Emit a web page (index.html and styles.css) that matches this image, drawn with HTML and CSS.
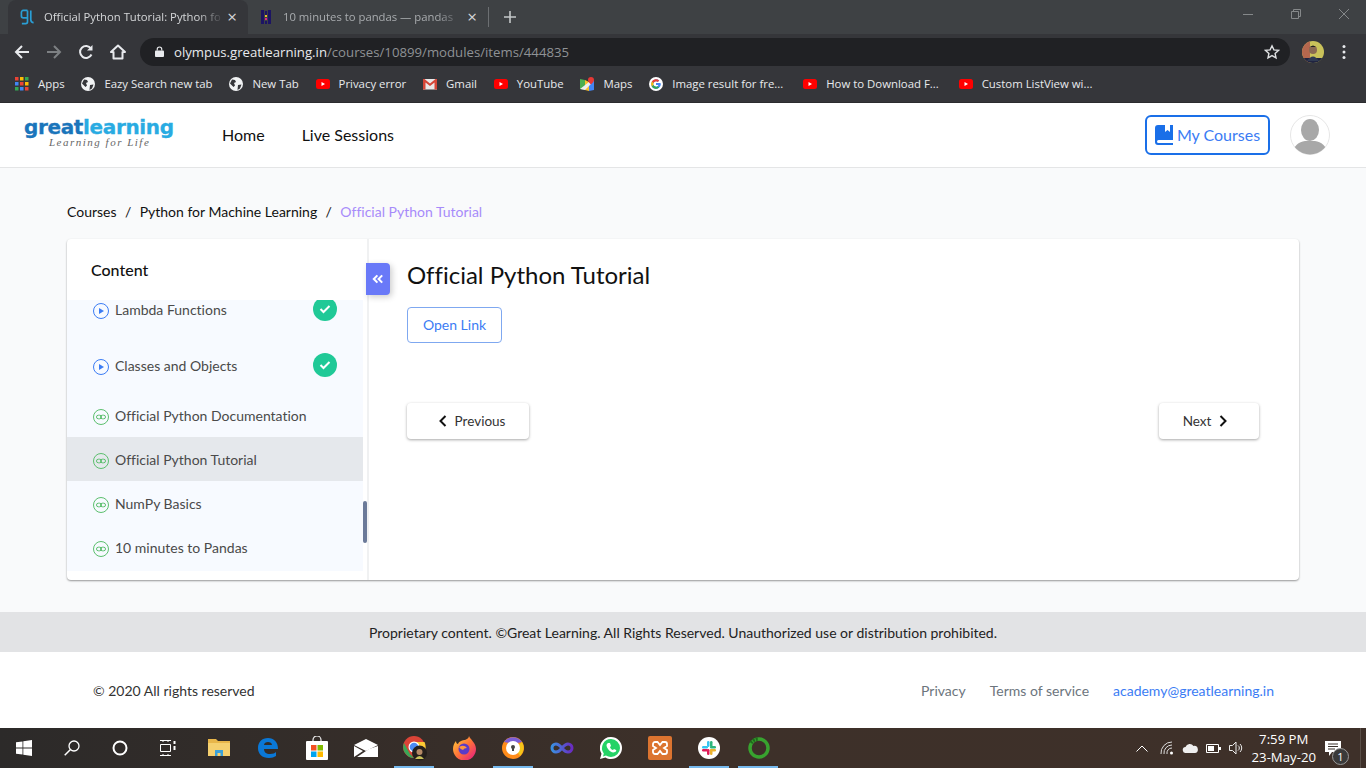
FILE: index.html
```html
<!DOCTYPE html>
<html lang="en">
<head>
  <meta charset="UTF-8">
  <title>Official Python Tutorial</title>
  <link rel="stylesheet" href="styles.css">
</head>
<body>

<!-- Browser chrome -->
<div class="tabstrip">
  <div class="tab active">
    <svg class="favicon" viewBox="0 0 16 16"><path d="M8 1H3.500a2 2 0 0 0-2 2v4a2 2 0 0 0 2 2H8V1v12a2 2 0 0 1-2 2H2M11.500 1v10a3 3 0 0 0 3 3" fill="none" stroke="#2a9fd6" stroke-width="1.800"/></svg>
    <span class="tab-title">Official Python Tutorial: Python fo</span>
    <span class="tab-close">&times;</span>
  </div>
  <div class="tab">
    <svg class="favicon small" viewBox="0 0 12 16"><rect x="1" y="1" width="3" height="14" fill="#1c1463"/><rect x="8" y="1" width="3" height="14" fill="#1c1463"/><rect x="5" y="2" width="2" height="4" fill="#1c1463"/><rect x="5" y="6" width="2" height="2" fill="#e8b92d"/><rect x="5" y="9" width="2" height="2" fill="#e0218a"/><rect x="5" y="12" width="2" height="3" fill="#1c1463"/></svg>
    <span class="tab-title">10 minutes to pandas — pandas</span>
    <span class="tab-close">&times;</span>
  </div>
  <span class="tab-sep"></span>
  <svg class="new-tab" viewBox="0 0 12 12"><path d="M6 0v12M0 6h12" stroke="#c4c7c9" stroke-width="1.600"/></svg>
  <div class="win-controls">
    <svg viewBox="0 0 10 10"><path d="M0 5.500h10" stroke="#85888a"/></svg>
    <svg viewBox="0 0 10 10"><path d="M.5 2.500h7v7h-7zM2.500 2.500v-2h7v7h-2" fill="none" stroke="#85888a"/></svg>
    <svg viewBox="0 0 10 10"><path d="M0 0l10 10M10 0L0 10" stroke="#85888a"/></svg>
  </div>
</div>

<div class="toolbar">
  <svg class="nav-icon" viewBox="0 0 16 16"><path d="M15 8H2M8 2L2 8l6 6" fill="none" stroke="#e8eaed" stroke-width="2"/></svg>
  <svg class="nav-icon" viewBox="0 0 16 16"><path d="M1 8h13M8 2l6 6-6 6" fill="none" stroke="#7d8083" stroke-width="2"/></svg>
  <svg class="nav-icon" viewBox="0 0 16 16"><path d="M13.500 10.500A6 6 0 1 1 13 4.500" fill="none" stroke="#e8eaed" stroke-width="2"/><path d="M14.500 1v5.500H9z" fill="#e8eaed"/></svg>
  <svg class="nav-icon" viewBox="0 0 16 16"><path d="M8 1.500L1 8h2.500v6.500h9V8H15z" fill="none" stroke="#e8eaed" stroke-width="2" stroke-linejoin="round"/></svg>
  <div class="omnibox">
    <svg class="lock" viewBox="0 0 10 12"><path d="M2.500 5V3.500a2.500 2.500 0 0 1 5 0V5" fill="none" stroke="#e8eaed" stroke-width="1.300"/><rect y="5" width="10" height="7" rx="1" fill="#e8eaed"/></svg>
    <span class="url"><b>olympus.greatlearning.in</b>/courses/10899/modules/items/444835</span>
    <svg class="star" viewBox="0 0 16 16"><path d="M8 1.800l1.900 4.100 4.500.5-3.300 3 .9 4.500L8 11.600l-4 2.300.9-4.500-3.300-3 4.500-.5z" fill="none" stroke="#dfe1e3" stroke-width="1.400"/></svg>
  </div>
  <svg class="profile" viewBox="0 0 22 22"><defs><clipPath id="pc"><circle cx="11" cy="11" r="11"/></clipPath></defs><g clip-path="url(#pc)"><rect width="22" height="22" fill="#c9c25a"/><rect width="8" height="22" fill="#b5674e"/><rect y="17" width="22" height="5" fill="#1f2340"/><circle cx="11" cy="9" r="4" fill="#8a6a52"/><path d="M7 7q4-5 8 0l-1-1H8z" fill="#222"/><path d="M5 20q6-9 12 0z" fill="#2f3a52"/></g></svg>
  <svg class="kebab" viewBox="0 0 4 16"><circle cx="2" cy="2.500" r="1.500" fill="#e8eaed"/><circle cx="2" cy="8" r="1.500" fill="#e8eaed"/><circle cx="2" cy="13.500" r="1.500" fill="#e8eaed"/></svg>
</div>

<div class="bookmarks">
  <a class="bm">
    <svg viewBox="0 0 14 14"><rect width="3.500" height="3.500" fill="#ea4335"/><rect x="5" width="3.500" height="3.500" fill="#fbbc05"/><rect x="10" width="3.500" height="3.500" fill="#34a853"/><rect y="5" width="3.500" height="3.500" fill="#4285f4"/><rect x="5" y="5" width="3.500" height="3.500" fill="#ea4335"/><rect x="10" y="5" width="3.500" height="3.500" fill="#fbbc05"/><rect y="10" width="3.500" height="3.500" fill="#34a853"/><rect x="5" y="10" width="3.500" height="3.500" fill="#4285f4"/><rect x="10" y="10" width="3.500" height="3.500" fill="#ea4335"/></svg>
    Apps
  </a>
  <a class="bm">
    <svg viewBox="0 0 14 14"><circle cx="7" cy="7" r="7" fill="#f1f3f4"/><path d="M3 2.500l3 .5 1 2-2 1 1 2.500-1.500 1.500L1 6.500zM9 8l3.500-.5L11 11.500 8.500 13z" fill="#35363a"/></svg>
    Eazy Search new tab
  </a>
  <a class="bm">
    <svg viewBox="0 0 14 14"><circle cx="7" cy="7" r="7" fill="#f1f3f4"/><path d="M3 2.500l3 .5 1 2-2 1 1 2.500-1.500 1.500L1 6.500zM9 8l3.500-.5L11 11.500 8.500 13z" fill="#35363a"/></svg>
    New Tab
  </a>
  <a class="bm">
    <svg viewBox="0 0 14 14"><rect y="2" width="14" height="10" rx="2.500" fill="#f00"/><path d="M5.500 5v4l3.500-2z" fill="#fff"/></svg>
    Privacy error
  </a>
  <a class="bm">
    <svg viewBox="0 0 14 14"><rect y="2" width="14" height="10.500" fill="#e8e8e8"/><path d="M0 2v10.500h2.500V5.500L7 9l4.500-3.500v7H14V2h-1.500L7 6.500 1.500 2z" fill="#d44638"/></svg>
    Gmail
  </a>
  <a class="bm">
    <svg viewBox="0 0 14 14"><rect y="2" width="14" height="10" rx="2.500" fill="#f00"/><path d="M5.500 5v4l3.500-2z" fill="#fff"/></svg>
    YouTube
  </a>
  <a class="bm">
    <svg viewBox="0 0 14 14"><path d="M0 2l5 1v10l-5-1z" fill="#4caf50"/><path d="M5 3l4 2v9l-4-1z" fill="#fbc02d"/><path d="M9 5l5-2v10l-5 1z" fill="#4285f4"/><path d="M0 12L9 5l2 2-6 6z" fill="#eee"/><path d="M11 0a3 3 0 0 1 3 3c0 2-3 4.500-3 4.500S8 5 8 3a3 3 0 0 1 3-3z" fill="#e53935"/></svg>
    Maps
  </a>
  <a class="bm long">
    <svg viewBox="0 0 16 16"><circle cx="8" cy="8" r="8" fill="#fff"/><path d="M13 6.800H8v2.400h2.800A3 3 0 1 1 10 5.800l1.700-1.700A5.500 5.500 0 1 0 13.500 8z" fill="#4285f4"/><path d="M3.200 5.200A5.500 5.500 0 0 1 11.700 4.100L10 5.800a3 3 0 0 0-4.800 1z" fill="#ea4335"/><path d="M3.200 5.200l2 1.600a3 3 0 0 0 0 2.400l-2 1.600a5.500 5.500 0 0 1 0-5.600z" fill="#fbbc05"/><path d="M3.200 10.800l2-1.600a3 3 0 0 0 4.600 1.300l1.900 1.500a5.500 5.500 0 0 1-8.500-1.200z" fill="#34a853"/></svg>
    Image result for fre...
  </a>
  <a class="bm long">
    <svg viewBox="0 0 14 14"><rect y="2" width="14" height="10" rx="2.500" fill="#f00"/><path d="M5.500 5v4l3.500-2z" fill="#fff"/></svg>
    How to Download F...
  </a>
  <a class="bm">
    <svg viewBox="0 0 14 14"><rect y="2" width="14" height="10" rx="2.500" fill="#f00"/><path d="M5.500 5v4l3.500-2z" fill="#fff"/></svg>
    Custom ListView wi...
  </a>
</div>

<!-- Site header -->
<header class="site-header">
  <div class="logo">
    <div class="logo-name"><span class="great">great</span><span class="learning">learning</span></div>
    <div class="logo-tag">Learning for Life</div>
  </div>
  <nav class="main-nav">
    <a>Home</a>
    <a>Live Sessions</a>
  </nav>
  <button class="my-courses">
    <svg viewBox="0 0 18 20"><path d="M3 0h15v15H3.500a1 1 0 0 0 0 3H18v2H3a3 3 0 0 1-3-3V3a3 3 0 0 1 3-3z" fill="#1a6fe8"/><path d="M10 0h5v7l-2.500-2L10 7z" fill="#fff"/></svg>
    My Courses
  </button>
  <svg class="avatar" viewBox="0 0 40 40"><defs><clipPath id="ac"><circle cx="20" cy="20" r="19.500"/></clipPath></defs><circle cx="20" cy="20" r="19.500" fill="#fff" stroke="#e6e6e6"/><g clip-path="url(#ac)"><ellipse cx="20" cy="15" rx="9" ry="11" fill="#a8a8a8"/><path d="M3 40c0-10 6-13 12-14h10c6 1 12 4 12 14z" fill="#a8a8a8"/></g></svg>
</header>

<main class="page">
  <div class="breadcrumb">
    <a>Courses</a><span>/</span><a>Python for Machine Learning</a><span>/</span><a class="current">Official Python Tutorial</a>
  </div>

  <section class="card">
    <aside class="sidebar">
      <h3>Content</h3>
      <div class="list-wrap">
        <ul class="item-list">
          <li class="tall">
            <svg class="ico" viewBox="0 0 16 16"><circle cx="8" cy="8" r="7.500" fill="none" stroke="#3b7cf4"/><path d="M6 5v6l5-3z" fill="#3b7cf4"/></svg>
            <span>Lambda Functions</span>
            <span class="done"><svg viewBox="0 0 12 10"><path d="M1.500 5l3 3 6-6" fill="none" stroke="#fff" stroke-width="2"/></svg></span>
          </li>
          <li class="tall">
            <svg class="ico" viewBox="0 0 16 16"><circle cx="8" cy="8" r="7.500" fill="none" stroke="#3b7cf4"/><path d="M6 5v6l5-3z" fill="#3b7cf4"/></svg>
            <span>Classes and Objects</span>
            <span class="done"><svg viewBox="0 0 12 10"><path d="M1.500 5l3 3 6-6" fill="none" stroke="#fff" stroke-width="2"/></svg></span>
          </li>
          <li>
            <svg class="ico" viewBox="0 0 16 16"><circle cx="8" cy="8" r="7.500" fill="none" stroke="#5cbf6e"/><rect x="3.500" y="6.200" width="5" height="3.600" rx="1.800" fill="none" stroke="#5cbf6e"/><rect x="7.500" y="6.200" width="5" height="3.600" rx="1.800" fill="none" stroke="#5cbf6e"/></svg>
            <span>Official Python Documentation</span>
          </li>
          <li class="active">
            <svg class="ico" viewBox="0 0 16 16"><circle cx="8" cy="8" r="7.500" fill="none" stroke="#5cbf6e"/><rect x="3.500" y="6.200" width="5" height="3.600" rx="1.800" fill="none" stroke="#5cbf6e"/><rect x="7.500" y="6.200" width="5" height="3.600" rx="1.800" fill="none" stroke="#5cbf6e"/></svg>
            <span>Official Python Tutorial</span>
          </li>
          <li>
            <svg class="ico" viewBox="0 0 16 16"><circle cx="8" cy="8" r="7.500" fill="none" stroke="#5cbf6e"/><rect x="3.500" y="6.200" width="5" height="3.600" rx="1.800" fill="none" stroke="#5cbf6e"/><rect x="7.500" y="6.200" width="5" height="3.600" rx="1.800" fill="none" stroke="#5cbf6e"/></svg>
            <span>NumPy Basics</span>
          </li>
          <li>
            <svg class="ico" viewBox="0 0 16 16"><circle cx="8" cy="8" r="7.500" fill="none" stroke="#5cbf6e"/><rect x="3.500" y="6.200" width="5" height="3.600" rx="1.800" fill="none" stroke="#5cbf6e"/><rect x="7.500" y="6.200" width="5" height="3.600" rx="1.800" fill="none" stroke="#5cbf6e"/></svg>
            <span>10 minutes to Pandas</span>
          </li>
        </ul>
        <div class="scroll-track"><div class="scroll-thumb"></div></div>
      </div>
    </aside>

    <button class="collapse">
      <svg viewBox="0 0 10 8"><path d="M4.500 1L1.500 4l3 3M8.500 1l-3 3 3 3" fill="none" stroke="#fff" stroke-width="1.700"/></svg>
    </button>

    <div class="content">
      <h2>Official Python Tutorial</h2>
      <a class="open-link">Open Link</a>
      <div class="pager">
        <button class="prev">
          <svg viewBox="0 0 8 12"><path d="M6.500 1L1.500 6l5 5" fill="none" stroke="#111" stroke-width="2"/></svg>
          Previous
        </button>
        <button class="next">
          Next
          <svg viewBox="0 0 8 12"><path d="M1.500 1l5 5-5 5" fill="none" stroke="#111" stroke-width="2"/></svg>
        </button>
      </div>
    </div>
  </section>
</main>

<div class="notice">Proprietary content. ©Great Learning. All Rights Reserved. Unauthorized use or distribution prohibited.</div>

<footer class="site-footer">
  <span class="copy">© 2020 All rights reserved</span>
  <a>Privacy</a>
  <a>Terms of service</a>
  <a class="mail">academy@greatlearning.in</a>
</footer>

<!-- Windows taskbar -->
<div class="taskbar">
  <div class="task-icons">
    <span class="task sys"><svg width="16" height="16" viewBox="0 0 16 16"><path d="M0 2.300l6.500-.9v6.200H0zM7.300 1.300L16 0v7.600H7.300zM0 8.400h6.500v6.200L0 13.700zM7.300 8.400H16V16l-8.700-1.200z" fill="#fff"/></svg></span>
    <span class="task sys"><svg width="16" height="16" viewBox="0 0 16 16"><circle cx="10" cy="6" r="5" fill="none" stroke="#fff" stroke-width="1.300"/><path d="M6.500 9.500L.7 15.300" stroke="#fff" stroke-width="1.500"/></svg></span>
    <span class="task sys"><svg width="16" height="16" viewBox="0 0 16 16"><circle cx="8" cy="8" r="6.500" fill="none" stroke="#fff" stroke-width="2"/></svg></span>
    <span class="task sys"><svg width="16" height="16" viewBox="0 0 16 16"><path d="M0 .5h11M0 15.500h11M.5 4.500h10v7H.5z" fill="none" stroke="#fff"/><path d="M3 0v2M8 0v2M3 14v2M8 14v2" stroke="#fff"/><rect x="13.500" y="1" width="2" height="3" fill="#fff"/><rect x="13.500" y="6" width="2" height="4" fill="#fff"/></svg></span>
    <span class="task first-app"><svg width="22" height="18" viewBox="0 0 22 18"><path d="M0 0h8l2 2h12v15H0z" fill="#e8b64a"/><path d="M0 4h22v13H0z" fill="#f5d06f"/><path d="M7 17v-6h8v6h-2.500v-3h-3v3z" fill="#3aa0d8"/></svg></span>
    <span class="task"><svg width="20" height="20" viewBox="0 0 20 20"><path d="M10 0C16 0 20 4 20 11H6c0 3 2 5 6 5 3 0 5-1 6-2v4c-2 1-4 2-7 2C4 20 0 16 0 10 0 4 4 0 10 0zm4 7c0-2-2-3-4-3S6 5 6 7z" fill="#0a78d7"/></svg></span>
    <span class="task"><svg width="24" height="24" viewBox="0 0 24 24"><path d="M8 6V4a4 4 0 0 1 8 0v2" fill="none" stroke="#eee" stroke-width="1.200"/><rect x="1" y="5" width="22" height="19" rx="1" fill="#fff"/><rect x="6" y="9" width="5.500" height="5.500" fill="#f25022"/><rect x="12.500" y="9" width="5.500" height="5.500" fill="#7fba00"/><rect x="6" y="15.500" width="5.500" height="5.500" fill="#00a4ef"/><rect x="12.500" y="15.500" width="5.500" height="5.500" fill="#ffb900"/></svg></span>
    <span class="task"><svg width="24" height="18" viewBox="0 0 24 18"><path d="M0 6l12-6 12 6-12 6z" fill="#fff"/><path d="M0 7l9 5-9 6zM24 7v11H3l9-6 3-2z" fill="#fff"/></svg></span>
    <span class="task on"><svg width="26" height="26" viewBox="0 0 26 26"><circle cx="12" cy="12" r="11" fill="#db4437"/><path d="M2 8l6 11 4 4a11 11 0 0 1-10-15z" fill="#3aa757"/><path d="M12 7h10.500a11 11 0 0 1-10 16l5-10z" fill="#fcc934"/><circle cx="12" cy="12" r="5.500" fill="#fff"/><circle cx="12" cy="12" r="4.300" fill="#4b8bf5"/><circle cx="17.500" cy="18" r="7.500" fill="#241f1c"/><circle cx="17.500" cy="17" r="3" fill="#b58a66"/><path d="M13 24q4.500-6 9 0z" fill="#c9c25a"/></svg></span>
    <span class="task"><svg width="24" height="24" viewBox="0 0 24 24"><defs><linearGradient id="ff" x1="0" y1="0" x2="1" y2="1"><stop offset="0" stop-color="#ffd43b"/><stop offset=".5" stop-color="#ff7139"/><stop offset="1" stop-color="#e31587"/></linearGradient></defs><path d="M17 0c1 3 7 7 7 13a11.500 11.500 0 0 1-23 0c0-3 1-6 3-8 0 2 1 3 2 3 1-3 5-4 7-4 2-1 4-2 4-4z" fill="url(#ff)"/><circle cx="12" cy="13" r="5.500" fill="#5b3bc8"/><path d="M7 11q5-3 8 1-3 0-4 2-2 0-4-3z" fill="#ff9640"/></svg></span>
    <span class="task on"><svg width="24" height="24" viewBox="0 0 24 24"><circle cx="12" cy="12" r="11" fill="#ff8c1a"/><path d="M3 6a11 11 0 0 1 18 0l-9 2z" fill="#7b5fd6"/><path d="M21 6a11 11 0 0 1-2 14l-5-8z" fill="#f5c61a"/><circle cx="12" cy="12" r="7" fill="#fff"/><circle cx="12" cy="11" r="2" fill="#444"/><rect x="11" y="11" width="2" height="4" fill="#444"/></svg></span>
    <span class="task"><svg width="24" height="14" viewBox="0 0 24 14"><defs><linearGradient id="inf"><stop offset="0" stop-color="#3a8fe0"/><stop offset="1" stop-color="#6a2bc2"/></linearGradient></defs><path d="M6 3c3 0 5 3 6 4s3 4 6 4a4 4 0 0 0 0-8c-3 0-5 3-6 4s-3 4-6 4a4 4 0 0 1 0-8z" fill="none" stroke="url(#inf)" stroke-width="3"/></svg></span>
    <span class="task"><svg width="22" height="22" viewBox="0 0 22 22"><path d="M11 0a11 11 0 0 1 0 22c-2 0-4-.5-5.500-1.500L0 22l1.500-5.300A11 11 0 0 1 11 0z" fill="#fff"/><path d="M11 2a9 9 0 0 1 0 18c-2 0-3.500-.5-5-1.400l-3 .8.800-3A9 9 0 0 1 11 2z" fill="#25d366"/><path d="M8 6c-2 1-2 3 0 6s5 4 7 3 1-2 1-2l-2-1-1 1c-1 0-3-2-3-3l1-1-1-3z" fill="#fff"/></svg></span>
    <span class="task"><svg width="24" height="24" viewBox="0 0 24 24"><rect width="24" height="24" rx="2" fill="#dc7430"/><path d="M7 6h2.500l2.500 3 2.500-3H17a2 2 0 0 1 2 2v2l-3 2 3 2v2a2 2 0 0 1-2 2h-2.500L12 15l-2.500 3H7a2 2 0 0 1-2-2v-2l3-2-3-2V8a2 2 0 0 1 2-2z" fill="none" stroke="#fff" stroke-width="1.800"/></svg></span>
    <span class="task on"><svg width="22" height="22" viewBox="0 0 22 22"><circle cx="11" cy="11" r="11" fill="#fff"/><rect x="9" y="4" width="2.500" height="6" rx="1.200" fill="#36c5f0"/><rect x="4" y="9" width="6" height="2.500" rx="1.200" fill="#36c5f0"/><rect x="12" y="4" width="2.500" height="6" rx="1.200" fill="#2eb67d"/><rect x="12" y="9" width="6" height="2.500" rx="1.200" fill="#2eb67d"/><rect x="12" y="12" width="2.500" height="6" rx="1.200" fill="#ecb22e"/><rect x="12" y="12" width="6" height="2.500" rx="1.200" fill="#ecb22e"/><rect x="9" y="12" width="2.500" height="6" rx="1.200" fill="#e01e5a"/><rect x="4" y="12" width="6" height="2.500" rx="1.200" fill="#e01e5a"/></svg></span>
    <span class="task on"><svg width="22" height="22" viewBox="0 0 22 22"><circle cx="11" cy="11" r="9" fill="none" stroke="#38a32f" stroke-width="3.500"/><path d="M3 6a9 9 0 0 1 7-4" fill="none" stroke="#1f6b1c" stroke-width="3.500" stroke-dasharray="2 1"/></svg></span>
  </div>

  <div class="tray">
    <svg class="chevron" width="12" height="7" viewBox="0 0 12 7"><path d="M.5 6.500L6 1l5.500 5.500" fill="none" stroke="#fff"/></svg>
    <svg width="14" height="14" viewBox="0 0 14 14"><path d="M1 13A11 11 0 0 1 12 1M4 13a8 8 0 0 1 8-9M7 13a5 5 0 0 1 5-6" fill="none" stroke="#ddd"/><circle cx="11.500" cy="12" r="1.500" fill="#fff"/></svg>
    <svg width="16" height="10" viewBox="0 0 16 10"><path d="M4 10a3 3 0 0 1-.5-6A4.500 4.500 0 0 1 11.500 3 3.500 3.500 0 0 1 13 10z" fill="#eee"/></svg>
    <svg width="15" height="9" viewBox="0 0 15 9"><path d="M.5.500h12v8H.5z" fill="none" stroke="#fff"/><rect x="2" y="2" width="6" height="5" fill="#fff"/><rect x="13" y="3" width="2" height="3" fill="#fff"/></svg>
    <svg width="15" height="14" viewBox="0 0 15 14"><path d="M.5 4.500h3L7 1v12L3.500 9.500h-3zM9 4.500a3 3 0 0 1 0 5M11 3a5.500 5.500 0 0 1 0 8" fill="none" stroke="#eee"/></svg>
    <div class="clock">
      <div>7:59 PM</div>
      <div>23-May-20</div>
    </div>
    <div class="action-center">
      <svg width="16" height="15" viewBox="0 0 16 15"><path d="M0 0h16v11H7l-3 4v-4H0z" fill="#fff"/><path d="M3 3h10M3 5.500h10M3 8h7" stroke="#3a302a"/></svg>
      <span class="badge">1</span>
    </div>
    <span class="desk-edge"></span>
  </div>
</div>

</body>
</html>
```

FILE: styles.css
```css
* {
  box-sizing: border-box;
}

html, body {
  height: 100%;
}

body {
  margin: 0;
  width: 1366px;
  height: 768px;
  overflow: hidden;
  display: flex;
  flex-direction: column;
  font-family: Lato, sans-serif;
  font-variant-ligatures: none;
  background-color: #f9fafb;
}

svg {
  display: block;
  flex: none;
}

button {
  font-family: inherit;
  cursor: pointer;
}

/* Browser chrome */
.tabstrip {
  height: 34px;
  flex: none;
  display: flex;
  align-items: center;
  padding-left: 8px;
  background-color: #3e4144;
  font-family: "Open Sans", sans-serif;
  font-size: 11.3px;
}

.tab {
  width: 240px;
  height: 34px;
  padding: 0 8px 1px 12px;
  display: flex;
  align-items: center;
  color: #a9acaf;
  border-radius: 8px 8px 0 0;
}

.tab.active {
  background-color: #35363a;
  color: #d5d7d9;
}

.favicon {
  width: 15px;
  height: 16px;
  margin-right: 9px;
}

.favicon.small {
  width: 12px;
  margin-right: 11px;
}

.tab-title {
  flex: 1;
  overflow: hidden;
  white-space: nowrap;
  -webkit-mask-image: linear-gradient(to right, #000 85%, transparent);
  mask-image: linear-gradient(to right, #000 85%, transparent);
}

.tab-close {
  width: 16px;
  text-align: center;
  font-size: 17px;
  line-height: 16px;
  color: #d5d7d9;
}

.tab-sep {
  width: 1px;
  height: 20px;
  background-color: #6c6f72;
}

.new-tab {
  width: 12px;
  height: 12px;
  margin-left: 15px;
}

.win-controls {
  margin-left: auto;
  padding-right: 17px;
  display: flex;
  align-items: center;
  gap: 38px;
  height: 28px;
  align-self: flex-start;
}

.win-controls svg {
  width: 10px;
  height: 10px;
}

.toolbar {
  height: 35px;
  flex: none;
  display: flex;
  align-items: center;
  padding-left: 14px;
  background-color: #35363a;
  color: #e8eaed;
}

.nav-icon {
  width: 16px;
  height: 16px;
  margin-right: 16px;
}

.omnibox {
  width: 1150px;
  height: 28px;
  margin-left: -2px;
  padding: 0 10px 0 15px;
  display: flex;
  align-items: center;
  border-radius: 14px;
  background-color: #202124;
  font-family: "Open Sans", sans-serif;
  font-size: 13.2px;
  color: #8f9295;
}

.lock {
  width: 9px;
  height: 11px;
  margin-right: 10px;
}

.url {
  flex: 1;
}

.url b {
  font-weight: 400;
  color: #e8eaed;
}

.star {
  width: 16px;
  height: 16px;
}

.profile {
  width: 22px;
  height: 22px;
  margin-left: 12px;
}

.kebab {
  width: 4px;
  height: 16px;
  margin-left: 18px;
}

.bookmarks {
  height: 34px;
  flex: none;
  display: flex;
  align-items: center;
  gap: 16.8px;
  padding: 0 0 4px 15px;
  background-color: #35363a;
  border-bottom: 1px solid #2b2c2f;
  font-family: "Open Sans", sans-serif;
  font-size: 11.4px;
  color: #e8eaed;
}

.bm {
  display: flex;
  align-items: center;
  gap: 9px;
  white-space: nowrap;
}

.bm.long {
  margin-right: 3px;
}

.bm svg {
  width: 14px;
  height: 14px;
}

/* Site header */
.site-header {
  height: 65px;
  flex: none;
  display: flex;
  align-items: center;
  padding: 0 36px 0 24px;
  background-color: #fff;
  border-bottom: 1px solid #e4e5e6;
}

.logo {
  width: 198px;
  padding-bottom: 5px;
}

.logo-name {
  font-family: "DejaVu Sans", sans-serif;
  font-weight: 700;
  font-size: 20px;
  line-height: 20px;
  letter-spacing: -0.35px;
  -webkit-text-stroke: 0.3px;
}

.great {
  color: #1a75bb;
}

.learning {
  color: #29abe2;
}

.logo-tag {
  padding-left: 25px;
  font-family: "Liberation Serif", serif;
  font-style: italic;
  font-size: 11px;
  line-height: 11px;
  letter-spacing: 1.5px;
  color: #666;
}

.main-nav {
  display: flex;
  gap: 37px;
  padding-bottom: 2px;
  font-size: 16px;
  color: #111;
}

.my-courses {
  margin-left: auto;
  width: 125px;
  height: 40px;
  display: flex;
  align-items: center;
  justify-content: center;
  gap: 4px;
  padding: 0;
  border: 2px solid #1a6fe8;
  border-radius: 6px;
  background-color: #fff;
  font-size: 16px;
  line-height: 18px;
  color: #3b7cf4;
}

.my-courses svg {
  width: 18px;
  height: 20px;
}

.avatar {
  width: 40px;
  height: 40px;
  margin-left: 20px;
}

/* Page */
.page {
  flex: 1;
  padding: 0 67px;
}

.breadcrumb {
  height: 71px;
  padding-top: 16px;
  display: flex;
  align-items: center;
  gap: 8.4px;
  font-size: 14px;
  color: #111;
}

.breadcrumb .current {
  color: #a78bfa;
}

.card {
  position: relative;
  height: 341px;
  display: flex;
  background-color: #fff;
  border-radius: 4px;
  box-shadow: 0 1px 2px rgba(0,0,0,0.4);
}

.sidebar {
  width: 302px;
  flex: none;
  display: flex;
  flex-direction: column;
  border-right: 2px solid #f0f1f2;
}

.sidebar h3 {
  margin: 0;
  height: 61px;
  padding-left: 24px;
  display: flex;
  align-items: center;
  font-size: 16px;
  font-weight: 500;
  color: #111;
}

.list-wrap {
  position: relative;
  height: 271px;
  overflow: hidden;
}

.item-list {
  list-style: none;
  margin: -19px 4px 0 0;
  padding: 0 0 2px;
  background-color: #f7faff;
  font-size: 14px;
  color: #4a4a4a;
  clip-path: inset(19px 0 0 0);
}

.item-list li {
  height: 44px;
  display: flex;
  align-items: center;
  gap: 6px;
  padding: 0 26px;
  white-space: nowrap;
}

.item-list li.tall {
  height: 56px;
}

.item-list li.active {
  background-color: #e5e8ec;
}

.ico {
  width: 16px;
  height: 16px;
  margin-top: 4px;
}

.done {
  margin-left: auto;
  width: 24px;
  height: 24px;
  display: flex;
  align-items: center;
  justify-content: center;
  border-radius: 50%;
  background-color: #20c997;
}

.done svg {
  width: 12px;
  height: 10px;
}

.scroll-track {
  position: absolute;
  top: 0;
  right: 0;
  bottom: 0;
  width: 4px;
}

.scroll-thumb {
  position: absolute;
  top: 201px;
  width: 4px;
  height: 42px;
  border-radius: 2px;
  background-color: #6b7a99;
}

.collapse {
  position: absolute;
  top: 24px;
  left: 299px;
  width: 24px;
  height: 32px;
  padding: 0;
  display: flex;
  align-items: center;
  justify-content: center;
  border: none;
  border-radius: 0 4px 4px 0;
  background-color: #6979f8;
  box-shadow: 2px 2px 6px rgba(0,0,0,0.2);
}

.collapse svg {
  width: 12px;
  height: 10px;
}

.content {
  flex: 1;
  padding: 19px 40px 0 38px;
}

.content h2 {
  margin: 0 0 15px;
  font-size: 24px;
  line-height: 34px;
  font-weight: 400;
  color: #111;
}

.open-link {
  width: 95px;
  height: 36px;
  padding-bottom: 1px;
  display: flex;
  align-items: center;
  justify-content: center;
  border: 1px solid #7fa8f0;
  border-radius: 4px;
  font-size: 14px;
  color: #3b7cf4;
}

.pager {
  margin-top: 60px;
  display: flex;
  justify-content: space-between;
}

.pager button {
  height: 36px;
  display: flex;
  align-items: center;
  justify-content: center;
  gap: 8px;
  padding: 0;
  border: none;
  border-radius: 4px;
  background-color: #fff;
  font-size: 13.5px;
  color: #333;
  box-shadow: 0 1px 3px rgba(0,0,0,0.35);
}

.pager svg {
  width: 8px;
  height: 12px;
}

.pager .prev {
  width: 122px;
  padding-left: 8px;
}

.pager .next {
  width: 100px;
  padding-right: 8px;
}

/* Footer */
.notice {
  height: 40px;
  flex: none;
  display: flex;
  align-items: center;
  justify-content: center;
  background-color: #e2e3e5;
  font-size: 14px;
  color: #222;
}

.site-footer {
  height: 76px;
  flex: none;
  display: flex;
  align-items: center;
  gap: 24px;
  padding: 1px 92px 0 93px;
  background-color: #fff;
  font-size: 14px;
  color: #6c757d;
}

.copy {
  margin-right: auto;
  color: #333;
}

.mail {
  color: #3b7cf4;
}

/* Taskbar */
.taskbar {
  height: 40px;
  flex: none;
  display: flex;
  align-items: stretch;
  background: linear-gradient(to right, #2c2a29, #3d3029 50%, #3e3029);
  font-family: "Open Sans", sans-serif;
  color: #fff;
}

.task-icons {
  display: flex;
}

.task {
  position: relative;
  width: 49.1px;
  display: flex;
  align-items: center;
  justify-content: center;
}

.task.sys {
  width: 48px;
}

.task.first-app {
  margin-left: 2px;
}

.task.on::after {
  content: "";
  position: absolute;
  left: 4px;
  right: 5px;
  bottom: 0;
  height: 2px;
  background-color: #76b9ed;
}

.tray {
  margin-left: auto;
  display: flex;
  align-items: center;
  gap: 8px;
}

.chevron {
  margin-right: 4px;
}

.clock {
  margin-left: -0.5px;
  text-align: center;
  font-size: 13.2px;
  line-height: 18px;
}

.action-center {
  position: relative;
  margin-left: 1px;
}

.badge {
  position: absolute;
  top: 7px;
  left: 7px;
  width: 17px;
  height: 17px;
  display: flex;
  align-items: center;
  justify-content: center;
  border-radius: 50%;
  background-color: #3a3a3a;
  border: 1px solid #999;
  font-size: 11px;
}

.desk-edge {
  width: 6px;
  height: 100%;
  margin-left: 11px;
  border-left: 1px solid #5a4f48;
}
```
